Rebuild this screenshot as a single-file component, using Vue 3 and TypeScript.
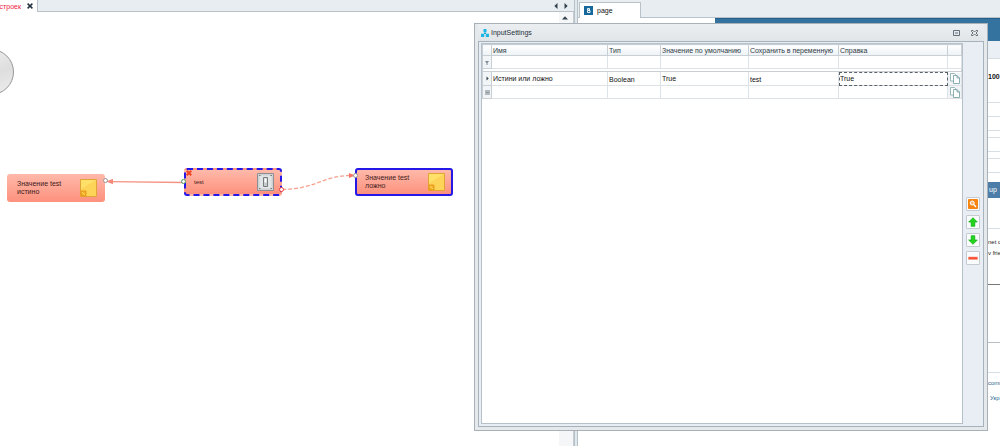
<script setup lang="ts">
import { ref } from 'vue'

interface Row {
  name: string
  type: string
  value: string
  target: string
  help: string
}

const row = ref<Row>({ name: 'Истини или ложно', type: 'Boolean', value: 'True', target: 'test', help: 'True' })
const filters = ['Имя', 'Тип', 'Значение по умолчанию', 'Сохранить в переменную', 'Справка']
</script>

<template>
  <div class="app">
    <section class="pane left">
      <header class="tabs">
        <div class="tab doc">
          <span class="doc-name">астроек</span>
          <button class="plain" aria-label="Закрыть вкладку">
            <svg width="6" height="6" viewBox="0 0 6 6"><path d="M.6 .6 5.4 5.4M5.4 .6 .6 5.4" stroke="#263442" stroke-width="1.5" /></svg>
          </button>
        </div>
        <nav class="arrows">
          <button class="plain" aria-label="Назад"><svg width="4" height="6"><path d="M3.5 0v6L.3 3z" fill="#34414d" /></svg></button>
          <button class="plain" aria-label="Вперёд"><svg width="4" height="6"><path d="M.5 0v6L3.7 3z" fill="#34414d" /></svg></button>
        </nav>
      </header>
      <div class="work">
        <div class="canvas">
          <div class="dial"></div>
          <svg class="links" width="470" height="60" viewBox="0 0 470 60">
            <path d="M184 27.5 110 26.7" stroke="#f69483" stroke-width="1.3" fill="none" />
            <path d="M106 26.5l7-2.8v5.6z" fill="#f58a79" />
            <path d="M282 34.500C316 34 322 21 350 20.500" stroke="#f8a08f" stroke-width="1.3" stroke-dasharray="4 2" fill="none" />
            <path d="M355 20.500l-6-2.500v5z" fill="#f47565" />
          </svg>
          <div class="node true">
            <span>Значение test<br />истино</span>
            <svg class="note" width="17" height="18" viewBox="0 0 17 18"><path d="M.5 .5h16v17H.5z" fill="#fdd458" stroke="#e1a435" /><path d="M1 1h15L1 10z" fill="#ffe069" /><path d="M1 12h5v5H1z" fill="#f5ae23" stroke="#e59a1e" /><path d="M2 13l3 3" stroke="#ffd96a" /></svg>
            <i class="port right"></i>
          </div>
          <div class="node test">
            <svg class="cross" width="6" height="6" viewBox="0 0 6 6"><path d="M.7 .7 5.300 5.300M5.300 .7 .7 5.300" stroke="#f04525" stroke-width="2" /></svg>
            <span>test</span>
            <svg width="17" height="18" viewBox="0 0 17 18"><path d="M.5 .5h16v17H.5z" fill="#d4d8da" stroke="#8e8f92" /><path d="M2 2h13v14H2z" fill="#e2e5e6" stroke="#bfc4c7" stroke-width=".6" /><path d="M6.500 4.500h4v9h-4z" fill="#c7cbce" stroke="#777c80" /><path d="M7.500 5.500h2v4h-2z" fill="#fff" /><path d="M2 2.500h1.500M13.500 2.500H15M2 15.500h1.500M13.500 15.500H15" stroke="#777" /></svg>
            <i class="port in"></i><i class="port out"></i>
          </div>
          <div class="node false">
            <span>Значение test<br />ложно</span>
            <svg class="note" width="17" height="18" viewBox="0 0 17 18"><path d="M.5 .5h16v17H.5z" fill="#fdd458" stroke="#e1a435" /><path d="M1 1h15L1 10z" fill="#ffe069" /><path d="M1 12h5v5H1z" fill="#f5ae23" stroke="#e59a1e" /><path d="M2 13l3 3" stroke="#ffd96a" /></svg>
            <i class="port head"></i>
          </div>
        </div>
        <div class="scroll"><button class="plain" aria-label="Вверх"><svg width="6" height="4"><path d="M0 3.500h6L3 .3z" fill="#34414d" /></svg></button></div>
      </div>
    </section>
    <div class="split"></div>
    <section class="pane site">
      <header class="tabs">
        <div class="tab page">
          <svg width="9" height="9" viewBox="0 0 9 9"><path d="M0 0h9v9H0z" fill="#17699c" /><path d="M3.500 2.500h2v1.500h-2zM3.500 4.500h2.500v2H3.500z" fill="none" stroke="#fff" stroke-width=".9" /></svg>
          <span>page</span>
        </div>
      </header>
      <div class="web">
        <div class="hero"><div></div></div>
        <div class="sub"></div>
        <div class="rail">
          <div class="cell h44"><b>100</b></div>
          <div class="cell h14"></div>
          <div class="cell h14"></div>
          <div class="cell h7"></div>
          <div class="cell h14"></div>
          <div class="cell h7"></div>
          <div class="cell h14"></div>
          <div class="cell signup"><a href="#up">up</a></div>
          <div class="cell copy">net o<br />v frie</div>
          <div class="cell h58"></div>
          <div class="cell h30"></div>
          <div class="cell more"><a href="#comm">comm</a><a href="#ukr">Укр</a></div>
        </div>
      </div>
    </section>

    <section class="dialog" role="dialog" aria-labelledby="title">
      <header class="title">
        <svg width="8" height="8" viewBox="0 0 8 8"><path d="M4 2.500v2M2 6 4 4 6 6" stroke="#20aedd" fill="none" /><path d="M2.500 0h3v3.200h-3zM0 4.800h3.200V8H0zM4.800 4.800H8V8H4.800z" fill="#1cb7e4" /></svg>
        <h1 id="title">InputSettings</h1>
        <button class="plain" aria-label="Свернуть"><svg width="7" height="6" viewBox="0 0 7 6"><path d="M.5 .5h6v5h-6zM2 3h3" stroke="#65717b" fill="none" /></svg></button>
        <button class="plain" aria-label="Закрыть"><svg width="7" height="6" viewBox="0 0 7 6"><path d="M.5 .5h1.500L3.500 2 5 .5h1.500v1L5 3l1.500 1.500v1H5L3.500 4 2 5.500H.5v-1L2 3 .5 1.500z" stroke="#56626c" stroke-width=".9" fill="none" /></svg></button>
      </header>
      <div class="body">
        <div class="grid">
          <table>
            <colgroup><col class="c0" /><col class="c1" /><col class="c2" /><col class="c3" /><col class="c4" /><col class="c5" /><col class="c6" /></colgroup>
            <thead>
              <tr><th></th><th v-for="f in filters" :key="f" scope="col">{{ f }}</th><th></th></tr>
            </thead>
            <tbody>
              <tr class="filter">
                <td class="mark"><svg width="4" height="5"><path d="M0 1h4L2.500 3v2h-1V3z" fill="#7b8790" /></svg></td>
                <td v-for="f in filters" :key="f"><input :aria-label="'Фильтр: ' + f" /></td>
                <td></td>
              </tr>
              <tr class="gap"><td colspan="7"></td></tr>
              <tr class="current">
                <td class="mark"><svg width="3" height="5"><path d="M.5 .5v4L2.700 2.500z" fill="#333f49" /></svg></td>
                <td><input v-model="row.name" class="up" aria-label="Имя" /></td>
                <td><input v-model="row.type" aria-label="Тип" /></td>
                <td><input v-model="row.value" class="up" aria-label="Значение по умолчанию" /></td>
                <td><input v-model="row.target" aria-label="Сохранить в переменную" /></td>
                <td class="focus"><input v-model="row.help" class="up" aria-label="Справка" /></td>
                <td class="act"><button aria-label="Копировать"><svg width="10" height="11" viewBox="0 0 10 11"><path d="M.5 .5h4l1 1V8h-5z" fill="#fff" stroke="#82aaa9" stroke-width=".8" /><path d="M3.500 2.500h3.500l2.500 2.500v5.500h-6zM7 2.500V5h2.500" fill="#fff" stroke="#6f9da0" stroke-width=".8" /></svg></button></td>
              </tr>
              <tr>
                <td class="mark"><svg width="5" height="5"><path d="M0 0h5v5H0z" fill="#b4bbc0" /><path d="M1 2.500h3" stroke="#8b959c" /></svg></td>
                <td v-for="f in filters" :key="f"><input :aria-label="'Новая строка: ' + f" /></td>
                <td class="act"><button aria-label="Копировать"><svg width="10" height="11" viewBox="0 0 10 11"><path d="M.5 .5h4l1 1V8h-5z" fill="#fff" stroke="#82aaa9" stroke-width=".8" /><path d="M3.500 2.500h3.500l2.500 2.500v5.500h-6zM7 2.500V5h2.500" fill="#fff" stroke="#6f9da0" stroke-width=".8" /></svg></button></td>
              </tr>
            </tbody>
          </table>
        </div>
        <aside class="tools">
          <button aria-label="Найти"><svg width="10" height="10" viewBox="0 0 10 10"><rect width="10" height="10" rx="1" fill="#f58413" /><circle cx="4.200" cy="4" r="2" fill="#f9b977" stroke="#fff" /><path d="M5.700 5.500 8 8" stroke="#fff" stroke-width="1.400" /></svg></button>
          <button aria-label="Выше"><svg width="10" height="10" viewBox="0 0 10 10"><path d="M5 .7 9.300 5H6.800v4.300H3.200V5H.7z" fill="#20d51c" stroke="#0eaa12" stroke-width=".7" /></svg></button>
          <button aria-label="Ниже"><svg width="10" height="10" viewBox="0 0 10 10"><path d="M5 9.300 .7 5h2.500V.7h3.600V5h2.500z" fill="#20d51c" stroke="#0eaa12" stroke-width=".7" /></svg></button>
          <button aria-label="Удалить"><svg width="10" height="10" viewBox="0 0 10 10"><path d="M.5 4h9v2.400h-9z" fill="#fa4c31" stroke="#f48970" stroke-width=".5" /></svg></button>
        </aside>
      </div>
    </section>
  </div>
</template>

<style>
body { margin: 0; }
</style>

<style scoped>
* { box-sizing: border-box; }
.app { position: relative; display: flex; min-height: 100vh; overflow: hidden; background: #fff; color: #111; font: 7px/9px "Liberation Sans", Arial, sans-serif; }
button, input { font: inherit; color: inherit; padding: 0; margin: 0; }
svg { display: block; flex: none; }
.plain { border: 0; background: none; display: grid; place-items: center; }
.pane { display: flex; flex-direction: column; min-width: 0; }
.left { flex: 574; }
.site { flex: 422; }
.split { width: 4px; border: 1px solid #b7c1c8; border-top: 0; border-bottom: 0; background: #e1e8ed; }
.tabs { display: flex; background: #e8edf1; border-bottom: 1px solid #b9c2c9; }
.left .tabs { height: 12px; }
.tab { background: #fff; display: flex; align-items: center; }
.doc { width: 38px; height: 12px; margin-bottom: -1px; justify-content: flex-end; gap: 6px; padding-right: 4px; border-right: 1px solid #b9c2c9; }
.doc-name { color: #f0203c; }
.arrows { margin-left: auto; display: flex; gap: 6px; padding-right: 6px; align-items: center; }
.work { flex: 1; display: flex; }
.canvas { position: relative; flex: 1; overflow: hidden; }
.scroll { width: 15px; background: #f5f6f7; border-right: 1px solid #c5cdd3; }
.scroll button { width: 11px; height: 11px; }
.dial { position: absolute; left: -32px; top: 37px; width: 46px; height: 46px; border: 1px solid #969696; border-radius: 50%; background: linear-gradient(160deg, #f0f0f0, #dedede 55%, #ededed); }
.links { position: absolute; left: 0; top: 143px; }
.node { position: absolute; width: 98px; height: 28px; border-radius: 3px; background: linear-gradient(#ffb9aa, #fd917d); display: flex; align-items: center; justify-content: space-between; padding: 0 8px 0 10px; line-height: 8px; color: #40201c; }
.true { left: 7px; top: 162px; }
.test { left: 184px; top: 156px; border: 2px dashed #2417e8; padding: 0 6px 0 8px; }
.false { left: 355px; top: 156px; border: 2px solid #2417e8; padding: 0 6px 0 8px; }
.test span { font-size: 6px; }
.cross { position: absolute; left: 0; top: 0; }
.port { position: absolute; width: 5px; height: 5px; border: 1px solid #9e9490; border-radius: 50%; background: #fff; }
.right { right: -3px; top: 4px; }
.in { left: -5px; top: 9px; border-color: #4f9a62; }
.out { right: -4px; top: 17px; border-color: #ee3c3c; }
.head { left: -4px; top: 3px; }
.site .tabs { height: 18px; padding: 2px 0 0 1px; }
.page { width: 62px; height: 16px; padding: 0 4px; gap: 4px; border: 1px solid #b9c2c9; border-bottom: 0; }
.web { flex: 1; display: flex; flex-direction: column; }
.hero { height: 23px; padding-left: 137px; }
.hero div { height: 23px; background: #3472a0; border-top: 1px solid #265f8c; }
.sub { height: 18px; background: #e9eff4; border-bottom: 1px solid #d5dde3; }
.rail { width: 14px; margin-left: auto; overflow: hidden; white-space: nowrap; }
.cell { border-bottom: 1px solid #d8dfe4; padding-left: 2px; }
.h44 { height: 44px; padding-top: 13px; color: #111; }
.h14 { height: 14px; } .h7 { height: 7px; } .h58 { height: 58px; border-color: #b9bec2; } .h30 { height: 30px; }
.signup { height: 56px; padding: 9px 0 0; }
.signup a { display: block; height: 16px; padding: 3px 0 0 3px; background: #4c7da8; color: #fff; }
.copy { height: 56px; padding-top: 8px; font-size: 6px; line-height: 11px; border-bottom: 1px solid #777; color: #222; }
.more { border: 0; padding-top: 6px; display: grid; gap: 6px; font-size: 6px; }
.more a:last-child { padding-left: 2px; }
a { color: #28658e; text-decoration: none; }
.dialog { position: absolute; left: 47.4%; right: 12px; top: 23px; bottom: 15px; display: flex; flex-direction: column; padding: 0 3px 3px; background: #e5e9ec; border: 1px solid #a8b1b8; }
.title { height: 17px; display: flex; align-items: center; gap: 2px; padding: 0 5px 0 3px; background: linear-gradient(#eceff1, #e1e5e8); }
.title h1 { flex: 1; margin: 0; font: inherit; color: #26323b; }
.title button { width: 9px; height: 9px; }
.title button:last-child { margin-left: 7px; }
.body { flex: 1; display: flex; border: 1px solid #a7b3bc; background: #e8eef3; padding: 1px 0 2px 2px; }
.grid { flex: 1; min-width: 0; background: #fff; border: 1px solid #b5c0c8; }
.tools { width: 20px; padding-bottom: 5px; display: flex; flex-direction: column; align-items: center; justify-content: center; gap: 4px; }
.tools button { width: 14px; height: 14px; border: 1px solid #c5cbd0; border-radius: 1px; background: #fafbfc; display: grid; place-items: center; }
table { width: 100%; table-layout: fixed; border-collapse: collapse; }
.c0 { width: 9px; } .c1 { width: 116px; } .c2 { width: 53px; } .c3 { width: 88px; } .c4 { width: 90px; } .c6 { width: 14px; }
th, td { height: 13px; padding: 0; border: 1px solid #dde2e6; }
th { height: 11px; padding: 0 1px; text-align: left; font-weight: 400; color: #2f3b45; white-space: nowrap; background: linear-gradient(#fff, #edf2f6); border-color: #c8d0d6; }
td input { display: block; width: 100%; height: 12px; border: 0; padding: 2px 1px 0; background: transparent; outline: 0; }
td input.up { padding: 0 1px 1px; }
.mark { background: #f2f5f7; border-color: #c8d0d6; }
.mark svg { margin: 0 auto; }
.gap td { height: 3px; background: #fff; border-color: #c8d0d6; }
.current td { height: 14px; }
td.focus { outline: 1px dashed #59626a; outline-offset: -1px; }
.act button { width: 100%; height: 12px; border: 0; background: #f0f4f6; display: grid; place-items: center; }
</style>
